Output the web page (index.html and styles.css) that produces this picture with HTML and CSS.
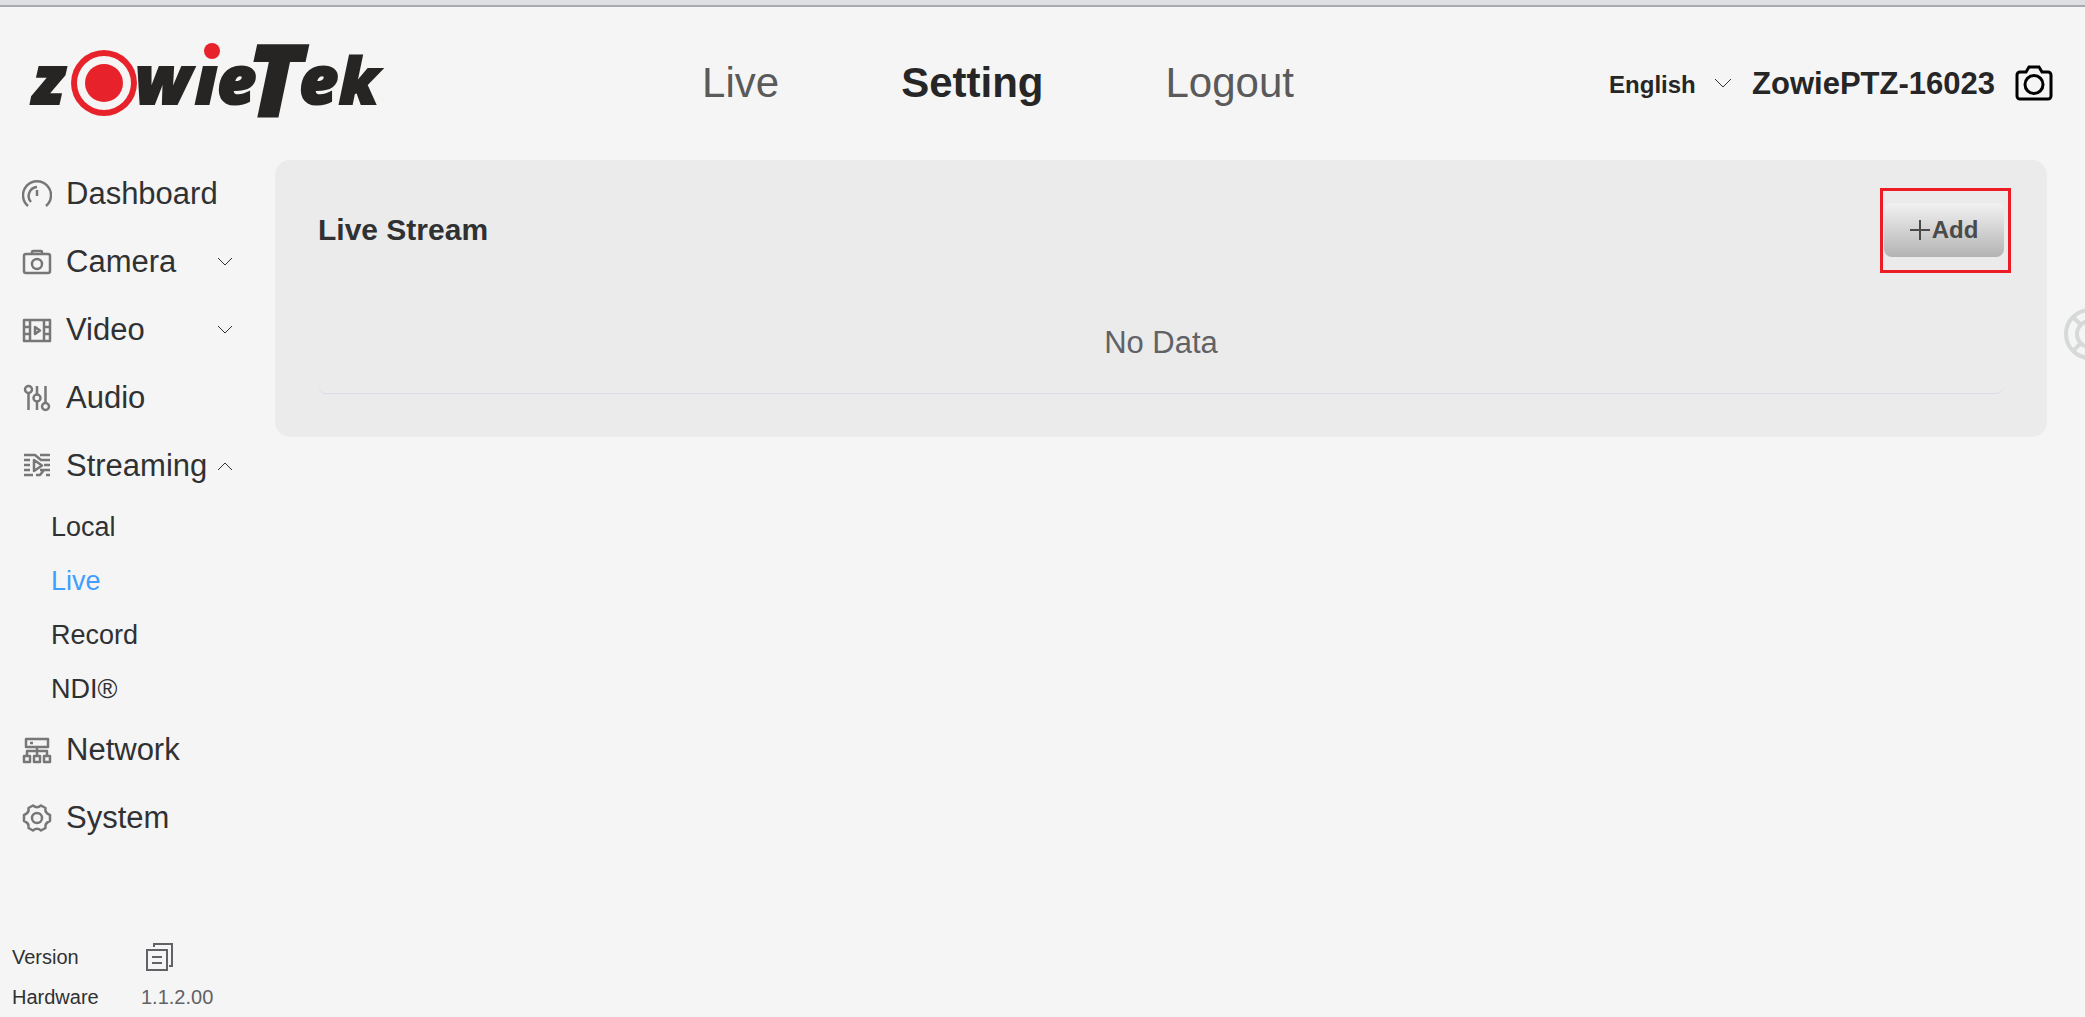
FILE: index.html
```html
<!DOCTYPE html>
<html lang="en">
<head>
    <meta charset="UTF-8">
    <title>ZowiePTZ-16023</title>
    <link rel="stylesheet" href="styles.css">
</head>
<body>
    <header class="header">
        <a class="logo" href="#" aria-label="zowieTek">
            <svg width="356" height="80" viewBox="31 43 356 80">
                <g class="logo-text">
                    <text x="32" y="104">z</text>
                    <text x="135" y="104">w</text>
                    <text x="195" y="104">ı</text>
                    <text x="217" y="104">e</text>
                    <text class="logo-big" x="247" y="116">T</text>
                    <text x="299" y="104">e</text>
                    <text class="logo-k" x="339" y="104">k</text>
                </g>
                <circle cx="104" cy="83" r="33" fill="#e8222b"/>
                <circle cx="104" cy="83" r="27" fill="#f5f5f5"/>
                <circle cx="104" cy="83" r="19" fill="#e8222b"/>
                <circle cx="212" cy="51" r="8" fill="#e8222b"/>
            </svg>
        </a>

        <nav class="top-nav">
            <a href="#">Live</a>
            <a href="#" class="active">Setting</a>
            <a href="#">Logout</a>
        </nav>

        <div class="header-right">
            <label class="language">
                <select aria-label="Language">
                    <option>English</option>
                </select>
                <svg width="18" height="12" viewBox="0 0 18 12"><path d="M1 1l8 8 8-8"/></svg>
            </label>
            <span class="device-name">ZowiePTZ-16023</span>
            <button class="snapshot" aria-label="Snapshot">
                <svg width="38" height="36" viewBox="0 0 38 36">
                    <path d="M5 7h6l3-5h10l3 5h6a3 3 0 0 1 3 3v21a3 3 0 0 1-3 3H5a3 3 0 0 1-3-3V10a3 3 0 0 1 3-3z"/>
                    <circle cx="19" cy="19.500" r="9"/>
                </svg>
            </button>
        </div>
    </header>

    <div class="layout">
        <aside class="sidebar">
            <nav class="menu">
                <a class="menu-item" href="#">
                    <svg class="icon" viewBox="0 0 30 30"><path d="M6 27A14 14 0 1 1 24 27M9 23A9 9 0 0 1 15 8M15 11v6"/></svg>
                    <span>Dashboard</span>
                </a>
                <button class="menu-item">
                    <svg class="icon" viewBox="0 0 30 30"><rect x="2" y="7" width="26" height="19" rx="2"/><path d="M10 7V5a1 1 0 0 1 1-1h8a1 1 0 0 1 1 1v2"/><circle cx="15" cy="17" r="5"/></svg>
                    <span>Camera</span>
                    <svg class="arrow" viewBox="0 0 16 10"><path d="M1 1l7 7 7-7"/></svg>
                </button>
                <button class="menu-item">
                    <svg class="icon" viewBox="0 0 30 30"><path d="M2 5h26v21H2zM8 5v21M22 5v21M2 12h6M2 19h6M22 12h6M22 19h6M13 12v7l5-3.500z"/></svg>
                    <span>Video</span>
                    <svg class="arrow" viewBox="0 0 16 10"><path d="M1 1l7 7 7-7"/></svg>
                </button>
                <a class="menu-item" href="#">
                    <svg class="icon" viewBox="0 0 30 30"><circle cx="6.500" cy="6.500" r="3.500"/><circle cx="15" cy="15" r="3.500"/><circle cx="23.500" cy="23.500" r="3.500"/><path d="M6.500 10v17M15 3v8.500M15 18.500v8.500M23.500 3v17"/></svg>
                    <span>Audio</span>
                </a>
                <button class="menu-item" aria-expanded="true">
                    <svg class="icon" viewBox="0 0 30 30"><path d="M2 4h11l6 5h9M18 4h10M2 9h6M2 14h6M2 19h6M22 14h6M18 19h10M2 24h9M14 24h4l4-5M24 24h4M12 9v11l8-5.500z"/></svg>
                    <span>Streaming</span>
                    <svg class="arrow" viewBox="0 0 16 10"><path d="M1 9l7-7 7 7"/></svg>
                </button>
                <div class="submenu">
                    <a href="#">Local</a>
                    <a href="#" class="active">Live</a>
                    <a href="#">Record</a>
                    <a href="#">NDI®</a>
                </div>
                <a class="menu-item" href="#">
                    <svg class="icon" viewBox="0 0 30 30"><path d="M4 4h22v8H4zM8 8h3M15 12v9M5 21v-5h20v5M2 21h6v6H2zM12 21h6v6h-6zM22 21h6v6h-6z"/></svg>
                    <span>Network</span>
                </a>
                <a class="menu-item" href="#">
                    <svg class="icon" viewBox="0 0 30 30"><path d="M11 2.500Q15 6 19 2.500L23.500 5Q22.500 10 28 12V18Q22.500 20 23.500 25L19 27.500Q15 24 11 27.500L6.500 25Q7.500 20 2 18V12Q7.500 10 6.500 5Z"/><circle cx="15" cy="15" r="5"/></svg>
                    <span>System</span>
                </a>
            </nav>

            <dl class="device-info">
                <dt>Version</dt>
                <dd>
                    <button class="version-button" aria-label="Version details">
                        <svg width="28" height="28" viewBox="0 0 28 28"><path d="M1 7h20v20H1zM6 14h10M6 20h10M8 4V1h18v22h-3"/></svg>
                    </button>
                </dd>
                <dt>Hardware</dt>
                <dd>1.1.2.00</dd>
            </dl>
        </aside>

        <main class="content">
            <section class="card">
                <div class="card-header">
                    <h1>Live Stream</h1>
                    <div class="add-wrap">
                        <button class="add-button">
                            <svg width="20" height="20" viewBox="0 0 20 20"><path d="M10 0v20M0 10h20"/></svg>
                            <span>Add</span>
                        </button>
                    </div>
                </div>
                <div class="empty">No Data</div>
            </section>
        </main>
    </div>

    <button class="help" aria-label="Help">
        <svg width="52" height="52" viewBox="0 0 52 52">
            <circle cx="26" cy="26" r="24"/>
            <circle cx="26" cy="26" r="13"/>
            <path d="M9 9l8 8M43 9l-8 8M9 43l8-8M43 43l-8-8"/>
        </svg>
    </button>
</body>
</html>
```

FILE: styles.css
```css
* {
    box-sizing: border-box;
}

body {
    margin: 0;
    min-height: 100vh;
    display: flex;
    flex-direction: column;
    font-family: "Liberation Sans", Arial, sans-serif;
    font-size: 31px;
    color: #303133;
    background-color: #f5f5f5;
    border-top: 5px solid #dedfe3;
    overflow-x: hidden;
}

a {
    color: inherit;
    text-decoration: none;
}

button,
select {
    padding: 0;
    border: none;
    background: none;
    font: inherit;
    color: inherit;
    cursor: pointer;
}

svg {
    display: block;
    flex: none;
    fill: none;
}

/* Header */
.header {
    display: flex;
    justify-content: space-between;
    align-items: center;
    height: 153px;
    padding: 0 32px 0 31px;
    border-top: 2px solid #a9a9b0;
}

.logo svg {
    overflow: visible;
}

.logo-text {
    font-family: "Open Sans", "Liberation Sans", sans-serif;
    font-size: 68px;
    font-weight: 800;
    font-style: italic;
    fill: #262523;
    stroke: #262523;
    stroke-width: 2px;
}

.logo-big {
    font-size: 100px;
}

.logo-k {
    font-size: 64px;
}

.top-nav {
    display: flex;
    gap: 122px;
    font-size: 42px;
    color: #5a5a5a;
}

.top-nav .active {
    font-weight: bold;
    color: #262626;
}

.header-right {
    display: flex;
    align-items: center;
    gap: 20px;
    font-weight: bold;
    color: #262626;
}

.language {
    display: flex;
    align-items: center;
    gap: 18px;
    font-size: 24px;
}

.language select {
    appearance: none;
}

.language svg {
    stroke: #303133;
    stroke-width: 1px;
}

.language,
.device-name {
    padding-top: 3px;
}

.snapshot svg {
    stroke: #000;
    stroke-width: 3px;
}

/* Sidebar */
.layout {
    flex: 1;
    display: flex;
    padding-top: 2px;
}

.sidebar {
    flex: none;
    width: 275px;
    display: flex;
    flex-direction: column;
    justify-content: space-between;
}

.menu-item {
    display: flex;
    align-items: center;
    width: 100%;
    height: 68px;
    padding: 0 42px 0 22px;
    text-align: left;
}

.icon {
    width: 30px;
    height: 30px;
    margin-right: 14px;
    stroke: #777;
    stroke-width: 2.5;
    stroke-linejoin: round;
}

.arrow {
    width: 16px;
    height: 10px;
    margin-left: auto;
    stroke: #303133;
    stroke-width: 1px;
}

.submenu {
    font-size: 27px;
}

.submenu a {
    display: block;
    padding-left: 51px;
    line-height: 54px;
}

.submenu .active {
    color: #409eff;
}

.device-info {
    display: grid;
    grid-template-columns: 129px 1fr;
    align-items: center;
    margin: 0;
    padding-left: 12px;
    font-size: 20px;
    line-height: 40px;
}

.device-info dd {
    margin: 0;
    color: #606266;
}

.version-button {
    display: block;
    padding-left: 5px;
}

.version-button svg {
    stroke: #606266;
    stroke-width: 2px;
}

/* Content */
.content {
    flex: 1;
    padding-right: 38px;
}

.card {
    padding: 43px;
    border-radius: 15px;
    background-color: #ebebeb;
}

.card-header {
    display: flex;
    justify-content: space-between;
    align-items: center;
}

.card-header h1 {
    margin: 0;
    font-size: 30px;
}

.add-wrap {
    position: relative;
}

/* highlight frame around the button */
.add-wrap::after {
    content: "";
    position: absolute;
    inset: -15px -7px -16px -4px;
    border: 3px solid #ed1c24;
    pointer-events: none;
}

.add-button {
    display: flex;
    justify-content: center;
    align-items: center;
    gap: 2px;
    width: 120px;
    height: 54px;
    border-radius: 8px;
    background: linear-gradient(#f2f2f2, #b3b3b3);
    font-size: 24px;
    font-weight: bold;
    color: #4a4a4a;
}

.add-button svg {
    stroke: #4a4a4a;
    stroke-width: 2px;
}

.empty {
    margin-top: 36px;
    border-bottom: 1px solid #dcdde6;
    border-radius: 8px;
    line-height: 100px;
    text-align: center;
    color: #606266;
}

.help {
    position: fixed;
    top: 308px;
    right: -31px;
}

.help svg {
    stroke: #d7d9d9;
    stroke-width: 4px;
}
```
